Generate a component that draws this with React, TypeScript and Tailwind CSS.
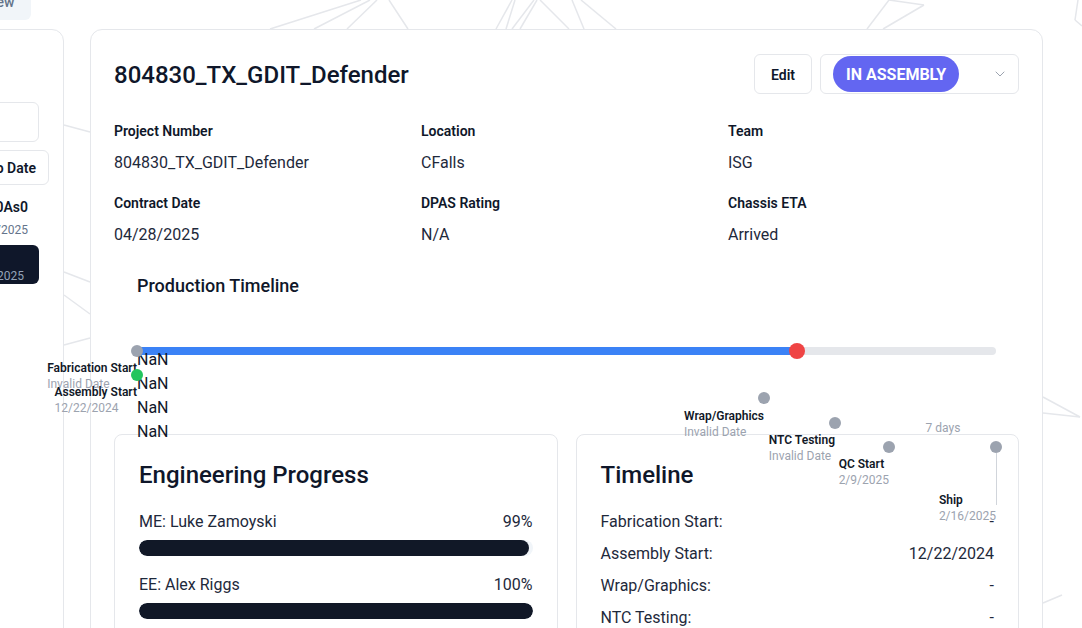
import React from "react";
import { ChevronDown } from "lucide-react";

type M = { x: number; y: number; color: string; title: string; date: string; ly: number };

const markers: M[] = [
  { x: 0, y: 52, color: "bg-[#9ca3af]", title: "Fabrication Start", date: "Invalid Date", ly: 61 },
  { x: 0, y: 76, color: "bg-[#22c55e]", title: "Assembly Start", date: "12/22/2024", ly: 85 },
  { x: 627, y: 99, color: "bg-[#9ca3af]", title: "Wrap/Graphics", date: "Invalid Date", ly: 109 },
  { x: 698, y: 124, color: "bg-[#9ca3af]", title: "NTC Testing", date: "Invalid Date", ly: 133 },
  { x: 752, y: 148, color: "bg-[#9ca3af]", title: "QC Start", date: "2/9/2025", ly: 157 },
  { x: 859, y: 148, color: "bg-[#9ca3af]", title: "Ship", date: "2/16/2025", ly: 193 },
];

const bgLines: [number, number, number, number][] = [
  [270, 29, 361, 0], [314, 29, 370, 0], [347, 29, 377, 0], [408, 29, 389, 0],
  [496, 29, 512, 0], [506, 29, 515, 0], [512, 29, 534, 0], [520, 29, 537, 0],
  [569, 29, 540, 0], [584, 29, 572, 0], [616, 29, 581, 0],
  [867, 29, 889, 0], [883, 29, 924, 5], [889, 0, 924, 5],
  [1078, 0, 1075, 20], [1075, 20, 1082, 26],
  [1043, 397, 1080, 417], [1043, 413, 1080, 417], [1043, 603, 1062, 595],
  [64, 125, 90, 132], [64, 272, 90, 282], [64, 295, 90, 314], [64, 345, 90, 338],
];

function Field({ label, value }: { label: string; value: string }) {
  return (
    <div>
      <div className="text-sm font-semibold leading-5 text-[#0f172a]">{label}</div>
      <div className="mt-[10px] text-base leading-6 text-[#1e293b]">{value}</div>
    </div>
  );
}

function ProgressRow({ name, pct, first }: { name: string; pct: number; first?: boolean }) {
  return (
    <div className={first ? "mt-[19px]" : "mt-[17px]"}>
      <div className="flex justify-between text-base leading-6 text-[#1e293b]">
        <span>{name}</span>
        <span>{pct}%</span>
      </div>
      <div className="mt-[6px] h-4 w-full overflow-hidden rounded-full bg-[#f1f5f9]">
        <div className="h-full rounded-full bg-[#111827]" style={{ width: `${pct}%` }} />
      </div>
    </div>
  );
}

function TRow({ label, value }: { label: string; value: string }) {
  return (
    <div className="flex justify-between text-base leading-6 text-[#1e293b]">
      <span>{label}</span>
      <span>{value}</span>
    </div>
  );
}

export default function App() {
  return (
    <div className="relative h-[628px] w-[1082px] overflow-hidden bg-white font-['Roboto',sans-serif] text-[#0f172a]">
      <svg className="pointer-events-none absolute inset-0" width={1082} height={628}>
        {bgLines.map(([x1, y1, x2, y2], i) => (
          <line key={i} x1={x1} y1={y1} x2={x2} y2={y2} stroke="#e5e7eb" strokeWidth={1.5} />
        ))}
      </svg>

      <div className="relative">
        <div className="flex h-[29px] items-start">
          <button className="-ml-[32px] -mt-4 h-9 rounded-md bg-[#f1f5f9] px-4 text-sm font-medium text-[#64748b]">
            View
          </button>
        </div>

        <div className="flex gap-[26px]">
          {/* left panel */}
          <div className="-ml-[236px] flex h-[700px] w-[300px] shrink-0 flex-col rounded-xl border border-[#e5e7eb] bg-white px-6 pt-[72px]">
            <div className="h-10 w-full rounded-md border border-[#e5e7eb] bg-white" />
            <button className="-mr-[10px] mt-2 h-[35px] self-end rounded-md border border-[#e5e7eb] bg-white px-3 text-sm font-semibold text-[#0f172a]">
              Jump to Date
            </button>
            <div className="mt-[12px] flex flex-col items-end pr-[11px]">
              <div className="whitespace-nowrap text-sm font-semibold leading-5 text-[#0f172a]">804830_TX_0As0</div>
              <div className="mt-[5px] text-xs leading-4 text-[#64748b]">04/28/2025</div>
            </div>
            <div className="mt-[7px] flex h-[39px] flex-col items-end justify-end rounded-md bg-[#0f172a] pr-[15px]">
              <div className="text-xs leading-4 text-[#94a3b8]">04/28/2025</div>
            </div>
          </div>

          {/* main card */}
          <div className="h-[700px] w-[953px] shrink-0 rounded-xl border border-[#e5e7eb] bg-white px-[23px] pt-6">
            <div className="flex h-10 items-center justify-between">
              <h1 className="pt-px text-2xl font-medium text-[#0f172a]">804830_TX_GDIT_Defender</h1>
              <div className="flex items-center gap-2">
                <button className="h-10 rounded-md border border-[#e5e7eb] bg-white px-4 pt-px text-sm font-semibold text-[#0f172a]">
                  Edit
                </button>
                <div className="flex h-10 w-[199px] items-center justify-between rounded-md border border-[#e5e7eb] bg-white pl-3 pr-[10px]">
                  <span className="flex h-9 items-center rounded-full bg-[#6366f1] px-[13px] pt-px text-base font-bold text-white">
                    IN ASSEMBLY
                  </span>
                  <ChevronDown className="h-4 w-4 text-[#9ca3af]" strokeWidth={1.5} />
                </div>
              </div>
            </div>

            <div className="mt-[27px] grid grid-cols-3 gap-x-4 gap-y-[18px]">
              <Field label="Project Number" value="804830_TX_GDIT_Defender" />
              <Field label="Location" value="CFalls" />
              <Field label="Team" value="ISG" />
              <Field label="Contract Date" value="04/28/2025" />
              <Field label="DPAS Rating" value="N/A" />
              <Field label="Chassis ETA" value="Arrived" />
            </div>

            <div className="mt-[25px] px-[23px]">
              <h2 className="text-lg font-medium leading-7 text-[#0f172a]">Production Timeline</h2>
              <div className="relative z-10 -mt-px h-[120px]">
                <div className="absolute left-0 right-0 top-[48px] h-2 rounded-full bg-[#e5e7eb]">
                  <div className="h-full w-[76.8%] rounded-full bg-[#3b82f6]" />
                </div>
                <div className="absolute left-[76.8%] top-[52px] h-4 w-4 -translate-x-1/2 -translate-y-1/2 rounded-full bg-[#ef4444]" />
                <div className="absolute left-0 top-[49px] flex flex-col text-base leading-6 text-[#0f172a]">
                  <span>NaN</span>
                  <span>NaN</span>
                  <span>NaN</span>
                  <span>NaN</span>
                </div>
                {markers.map((m) => (
                  <React.Fragment key={m.title}>
                    <div
                      className={`absolute h-3 w-3 -translate-x-1/2 -translate-y-1/2 rounded-full ${m.color}`}
                      style={{ left: m.x, top: m.y }}
                    />
                    <div
                      className="absolute -translate-x-full whitespace-nowrap text-left"
                      style={{ left: m.x, top: m.ly }}
                    >
                      <div className="text-xs font-semibold leading-4 text-[#111827]">{m.title}</div>
                      <div className="text-xs leading-4 text-[#9ca3af]">{m.date}</div>
                    </div>
                  </React.Fragment>
                ))}
                <div className="absolute left-[859px] top-[154px] h-[52px] w-px bg-[#d1d5db]" />
                <div className="absolute left-[806px] top-[121px] -translate-x-1/2 text-xs leading-4 text-[#9ca3af]">
                  7 days
                </div>
              </div>
            </div>

            <div className="mt-[15px] grid grid-cols-2 gap-[18px]">
              <div className="h-[300px] rounded-lg border border-[#e5e7eb] bg-white px-6 pt-6">
                <h3 className="text-2xl font-medium leading-8 text-[#0f172a]">Engineering Progress</h3>
                <ProgressRow name="ME: Luke Zamoyski" pct={99} first />
                <ProgressRow name="EE: Alex Riggs" pct={100} />
              </div>
              <div className="h-[300px] rounded-lg border border-[#e5e7eb] bg-white px-6 pt-6">
                <h3 className="text-2xl font-medium leading-8 text-[#0f172a]">Timeline</h3>
                <div className="mt-[19px] flex flex-col gap-2">
                  <TRow label="Fabrication Start:" value="-" />
                  <TRow label="Assembly Start:" value="12/22/2024" />
                  <TRow label="Wrap/Graphics:" value="-" />
                  <TRow label="NTC Testing:" value="-" />
                  <TRow label="QC Start:" value="2/9/2025" />
                  <TRow label="Ship:" value="2/16/2025" />
                </div>
              </div>
            </div>
          </div>
        </div>
      </div>
    </div>
  );
}
